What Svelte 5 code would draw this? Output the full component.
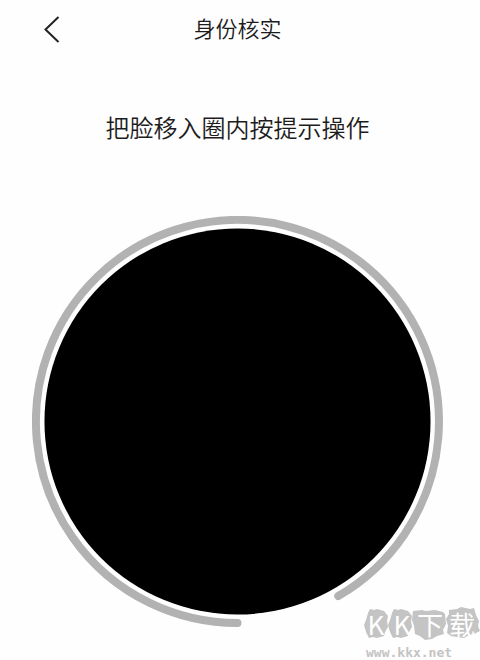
<script lang="ts">
  interface Props {
    title?: string;
    prompt?: string;
  }

  let { title = '身份核实', prompt = '把脸移入圈内按提示操作' }: Props = $props();
</script>

<div class="page">
  <header class="bar">
    <button class="back" type="button" aria-label="返回">
      <svg width="16" height="28" viewBox="0 0 16 28" aria-hidden="true">
        <path d="M14.5 1 1.5 13.5l13 12.5" />
      </svg>
    </button>
    <h1>{title}</h1>
  </header>

  <main>
    <p class="prompt">{prompt}</p>
    <svg class="scanner" viewBox="0 0 412 412" role="img" aria-label={prompt}>
      <circle cx="206" cy="206" r="193.5" />
      <path d="M206 408A202 202 0 1 1 307 380.9" />
    </svg>
  </main>

  <a class="watermark" href="http://www.kkx.net">
    <span class="brand">
      <svg viewBox="0 0 118 36" aria-hidden="true">
        <path d="M6 7l2-4 4 1 3-1 7 2 4 5-1 5 1 6-3 5-1 4-7 2-4-1-4 1-3-6-2-7 2-5z" />
        <path d="M30 7l2-4 4 1 3-1 7 2 4 5-1 5 1 6-3 5-1 4-7 2-4-1-4 1-3-6-2-7 2-5z" />
        <path d="M51 5l9-1 4 1 9-1 8 2 2 2 1 10-3 6 1 4-7 2-5 3-7 1-5-4-5-2-1-8-2-6z" />
        <path d="M87 4l8-1 4-2 9 2 4-1 2 7 3 6-1 5 2 5-6 3-5 1-5 3-7-1-6-1-4-3 1-7-2-7 3-5z" />
      </svg>
      <span class="glyph">K</span>
      <span class="glyph">K</span>
      <span class="glyph">下</span>
      <span class="glyph">载</span>
    </span>
    <span class="site">www.kkx.net</span>
  </a>
</div>

<style>
  :global(body) {
    margin: 0;
    background: #fefefe;
  }

  .page {
    position: relative;
    box-sizing: border-box;
    min-height: 100vh;
    padding-right: 5px;
    color: #1c1c1c;
    font-family: 'Liberation Sans', 'Noto Sans CJK SC', sans-serif;
    font-weight: 350;
  }

  .bar {
    display: grid;
    grid-template-columns: 60px 1fr 60px;
    align-items: center;
    height: 60px;
  }

  .back {
    justify-self: end;
    display: flex;
    padding: 0;
    border: 0;
    background: none;
    cursor: pointer;
  }

  .back path {
    fill: none;
    stroke: #222;
    stroke-width: 2;
  }

  h1 {
    margin: 0;
    font-size: 22px;
    font-weight: 350;
    line-height: 32px;
    text-align: center;
  }

  .prompt {
    margin: 53px 0 0;
    font-size: 24px;
    line-height: 32px;
    text-align: center;
  }

  .scanner {
    display: block;
    width: calc(100% - 64px);
    margin: 71px auto 0;
  }

  .scanner path {
    fill: none;
    stroke: #b2b2b2;
    stroke-width: 8;
    stroke-linecap: round;
  }

  /* sits over the lower right corner of the page */
  .watermark {
    position: absolute;
    right: 0;
    bottom: 0;
    width: 118px;
    color: #c4c4c4;
    text-decoration: none;
  }

  .brand {
    position: relative;
    display: grid;
    grid-template-columns: 28px 24px 32px 32px;
    height: 36px;
    margin-bottom: 4px;
  }

  .brand svg {
    position: absolute;
    inset: 0;
    fill: #c4c4c4;
  }

  .glyph {
    position: relative;
    color: #fff;
    font-family: 'Noto Sans CJK SC', sans-serif;
    font-size: 26px;
    font-weight: 400;
    line-height: 36px;
    text-align: center;
  }

  .site {
    display: block;
    padding-left: 4px;
    font-family: 'DejaVu Sans Mono', monospace;
    font-size: 13px;
    font-weight: 700;
    line-height: 14px;
  }
</style>
